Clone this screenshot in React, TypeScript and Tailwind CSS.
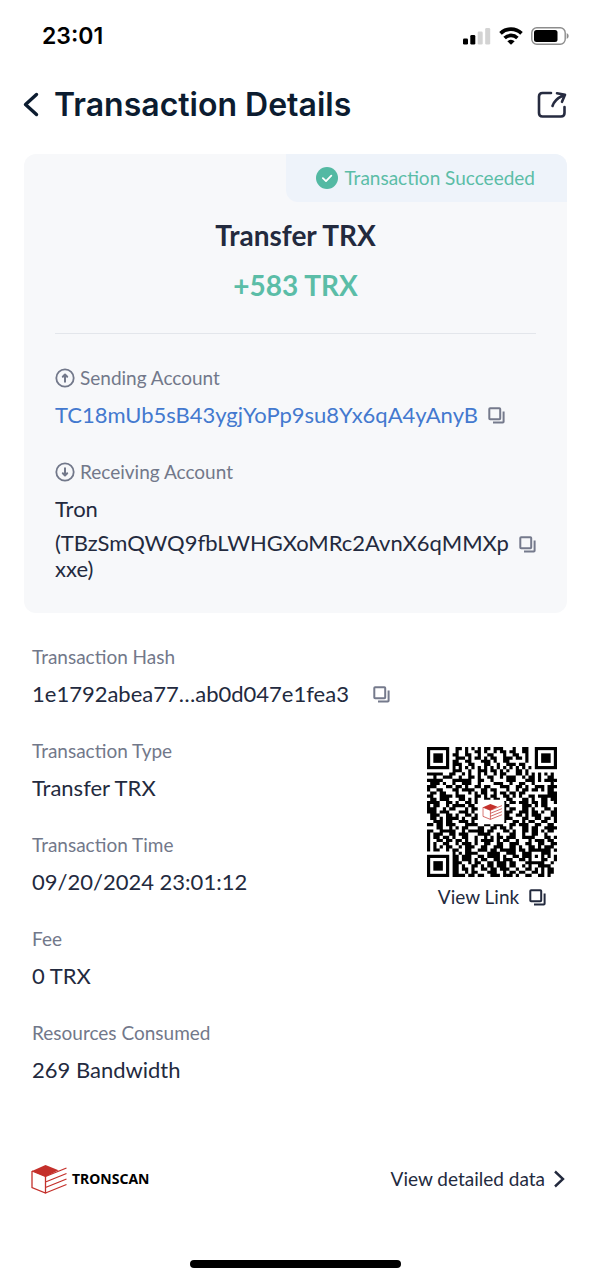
import type { ReactNode } from "react";

const QR_ROWS = [
  "#######..##.#.#.#.##.###...#..##..#######",
  "#.....#..#..#..##.#..#.##.##..##..#.....#",
  "#.###.#.##..##..#..##...#..##..#..#.###.#",
  "#.###.#..###.#.##.#.##..###.##.#..#.###.#",
  "#.###.#.##..##...###.#..##.....#..#.###.#",
  "#.....#.###..##...##..#..###.##...#.....#",
  "#######.#.#.#.#.#.#.#.#.#.#.#.#.#.#######",
  "........###..#..###.##.#.#..##.#.........",
  "#####..##..#.#..#.#..#.##...##.#.#.#.#.#.",
  "..#..###..#..##.#..##..#.###..#.##.#..##.",
  "#####...######..##..#....###...###.#.####",
  ".###.#..#..###..#....###..#..##..#.....#.",
  "###...##.##.#..##.##...###..##.#..###.###",
  "#..##...##.####..##.##...#..#.##.##.#.##.",
  ".##.##...#...#.#.##..#.##.##.##.......###",
  "##..####.###...##.#.##..##.#.#..##.######",
  ".##.###...##.#.#..##.##..##...##.#..##.##",
  "####..##.#..##.#........#.##.###.##.##..#",
  "#.##..#.####.##.........##....###.#.##...",
  "###..#.##...#.##........#.##..##.#...##.#",
  "###.###...###.#.........###..###.##.#..##",
  ".###..##.#..##.#........##..##.#.###...##",
  ".##.#.####.#..##........###...##..##.##.#",
  "..###.##..###.#.........#..##.#.##..##..#",
  "##.##.###...####..##.###..##.###..##..##.",
  "...##..#.#.##...##..##.##.#...##.##..####",
  "##..#####..#.#####.##...##.#..##.##.#.##.",
  "#.###..##.###...####..#...##..#..##..#...",
  "#.##.##.#..##..#..#.#.##.###..####...##.#",
  "#..##.##.##.#..#.####.#.##..#...#.###.##.",
  "#.#..##..#.###.#..##..##..###..##..##..##",
  "#.#.#.##..#.###..##..###..##.#..##.#.###.",
  "#.##..#.##..##..###.##.#####.##.#######.#",
  "........#.#.####...####..###..###...###..",
  "#.....#.##.###..##.####.#..##.###.#.#.#.#",
  "#.###.#.##.###.#.##..##.###..##.#...##..#",
  "#.###.#.###..#.##..##.###.##...######..#.",
  "#.###.#.##.#..##.#.##.###.##..#.#..####..",
  "#.....#.##.##.#..##.##.###..#..##.#.#.##.",
  "#######.##..#.##...###..#.##.##..##.#.##.",
  "........####.##.##..###.###.#..##..##.#..",
];

function finder(x: number, y: number) {
  return (
    <g>
      <rect x={x - 1} y={y - 1} width="9" height="9" fill="#fff" />
      <rect x={x} y={y} width="7" height="7" />
      <rect x={x + 1} y={y + 1} width="5" height="5" fill="#fff" />
      <rect x={x + 2} y={y + 2} width="3" height="3" />
    </g>
  );
}

function QrCode() {
  const cells = QR_ROWS.flatMap((row, y) =>
    [...row].map((c, x) => (c === "#" ? `M${x} ${y}h1v1h-1z` : "")),
  ).join("");

  return (
    <svg viewBox="0 0 41 41" className="size-[130px]" role="img" aria-label="QR code">
      <path d={cells} />
      {finder(0, 0)}
      {finder(34, 0)}
      {finder(0, 34)}
      <rect x="16.6" y="16.6" width="7.8" height="7.8" rx="0.8" fill="#fff" />
      <svg x="17.4" y="17.8" width="6.4" height="5.2" viewBox="0 0 36 30">
        <BoxMark />
      </svg>
    </svg>
  );
}

// Tronscan cube with the striped right face
function BoxMark() {
  return (
    <>
      <path d="M1 7 14.500 1 27.500 6.200 14.500 12.800z" fill="#c4302b" />
      <path
        d="M1 7v16.500l13.500 5.500V12.500L1 7M14.500 12.500 35.500 4M14.500 18 35.500 9.500M14.500 23.500 35.500 15M14.500 29 35.500 20.500"
        fill="none"
        stroke="#c4302b"
        strokeWidth="1.3"
      />
    </>
  );
}

function CopyButton({ label }: { label: string }) {
  return (
    <button type="button" aria-label={label} className="shrink-0 text-[#757a8c]">
      <CopyIcon />
    </button>
  );
}

function CopyIcon() {
  return (
    <svg viewBox="0 0 17 17" className="size-[17px]" fill="none" stroke="currentColor" strokeWidth="2">
      <rect x="1.300" y="1.300" width="10.900" height="10.900" rx="0.800" />
      <path d="M15.600 4.500v10.300q0 .8-.8.800H5" />
    </svg>
  );
}

function ArrowCircle({ down = false }: { down?: boolean }) {
  return (
    <svg
      viewBox="0 0 20 20"
      className={`size-5 ${down ? "rotate-180" : ""}`}
      fill="none"
      stroke="currentColor"
      strokeWidth="1.8"
      strokeLinecap="round"
      strokeLinejoin="round"
    >
      <circle cx="10" cy="10" r="8.700" />
      <path d="M10 13.800V6.800M7.800 8.700 10 6.500l2.200 2.200" strokeWidth="2" />
    </svg>
  );
}

function StatusBar() {
  return (
    <div className="flex h-[72px] items-center justify-between pr-[22px] pl-[42px] text-black">
      <span className="font-[Inter,sans-serif] text-[23px] leading-7 font-semibold">23:01</span>
      <div className="flex items-center gap-2">
        <svg viewBox="0 0 28 18" className="h-[18px] w-7">
          <rect x="0" y="11.500" width="5" height="6" rx="1.300" />
          <rect x="7.300" y="8" width="5" height="9.500" rx="1.300" />
          <rect x="14.700" y="4.500" width="5" height="13" rx="1.300" fill="#d3d3d3" />
          <rect x="22.200" y="1" width="5" height="16.500" rx="1.300" fill="#d3d3d3" />
        </svg>
        <svg viewBox="0 0 24 18" className="h-[18px] w-6" fill="none" stroke="#000" strokeWidth="3.600">
          <path d="M1.500 6.400a15 15 0 0 1 21 0M5.600 11a9.200 9.200 0 0 1 12.800 0" />
          <path d="M12 17.800 8.300 14.300a5.300 5.300 0 0 1 7.400 0z" fill="#000" stroke="none" />
        </svg>
        <svg viewBox="0 0 38 18" className="h-[18px] w-[38px]">
          <rect x="0.800" y="0.800" width="33.400" height="16.400" rx="5" fill="none" stroke="#8c8c8c" strokeWidth="1.400" />
          <rect x="3" y="3" width="23.500" height="12" rx="2.500" />
          <path d="M35.700 6v6q2-.8 2-3t-2-3" fill="#8c8c8c" />
        </svg>
      </div>
    </div>
  );
}

function Field({ label, children }: { label: string; children: ReactNode }) {
  return (
    <div>
      <dt className="text-[19px] leading-6 text-[#72788a]">{label}</dt>
      <dd className="mt-3 flex items-center text-[22px] leading-[26px] text-[#232a3e]">{children}</dd>
    </div>
  );
}

export default function App() {
  return (
    <div className="flex min-h-screen flex-col bg-white font-[Lato,sans-serif] text-[#232a3e]">
      <StatusBar />

      <header className="flex h-[66px] items-center pr-6 pl-[22px] text-[#0c1c30]">
        <button type="button" aria-label="Back">
          <svg viewBox="0 0 18 26" className="h-[26px] w-[18px]" fill="none" stroke="currentColor" strokeWidth="3.400" strokeLinecap="round" strokeLinejoin="round">
            <path d="M14.500 2.500 3.500 12.500l11 10" />
          </svg>
        </button>
        <h1 className="ml-[14px] flex-1 font-[Inter,sans-serif] text-[32px] leading-10 font-semibold">Transaction Details</h1>
        <button type="button" aria-label="Share" className="text-[#262b40]">
          <svg viewBox="0 0 30 28" className="h-7 w-[30px]" fill="none" stroke="currentColor" strokeWidth="2.600" strokeLinecap="round" strokeLinejoin="round">
            <path d="M14 2H5.500Q2 2 2 5.500v16.500q0 3.500 3.500 3.500h18.500q3.500 0 3.500-3.500V16" />
            <path d="M15.500 15q2-6.500 10.500-10.500M20 2.300l8 1.500-3 7" />
          </svg>
        </button>
      </header>

      <main className="mt-4 flex-1 px-6">
        <section className="overflow-hidden rounded-xl bg-[#f7f8fa]">
          <div className="ml-auto flex h-12 w-fit items-center gap-1.5 rounded-bl-xl bg-[#eef3fa] pr-8 pl-[30px] text-[19px] leading-6 text-[#5bbda7]">
            <svg viewBox="0 0 24 24" className="size-[22px]" fill="none">
              <circle cx="12" cy="12" r="12" fill="#53b9a3" />
              <path d="m7.500 12.200 3.400 3.200 5.800-6" stroke="#fff" strokeWidth="2" strokeLinecap="round" strokeLinejoin="round" />
            </svg>
            Transaction Succeeded
          </div>
          <div className="px-[31px] pb-[31px]">
            <h2 className="pt-[15px] text-center text-[28px] leading-9 font-bold">Transfer TRX</h2>
            <p className="mt-3.5 text-center text-[28px] leading-9 font-bold text-[#5bbda7]">+583 TRX</p>
            <hr className="mt-[30px] border-[#e3e6eb]" />

            <div className="mt-8 flex items-center gap-[5px] text-[19px] leading-6 text-[#72788a]">
              <ArrowCircle />
              Sending Account
            </div>
            <div className="mt-3 flex items-center gap-2.5 text-[22px] leading-[26px]">
              <a href="#sender" className="text-[#4379cf]">TC18mUb5sB43ygjYoPp9su8Yx6qA4yAnyB</a>
              <CopyButton label="Copy sending account" />
            </div>

            <div className="mt-8 flex items-center gap-[5px] text-[19px] leading-6 text-[#72788a]">
              <ArrowCircle down />
              Receiving Account
            </div>
            <p className="mt-3 text-[22px] leading-[26px]">Tron</p>
            <div className="mt-2 flex items-start gap-2 text-[22px] leading-[26px]">
              <p className="min-w-0 flex-1 break-all">(TBzSmQWQ9fbLWHGXoMRc2AvnX6qMMXpxxe)</p>
              <span className="flex h-7 items-center">
                <CopyButton label="Copy receiving account" />
              </span>
            </div>
          </div>
        </section>

        <div className="mt-8 px-2">
          <dl>
            <Field label="Transaction Hash">
              <span className="mr-6">1e1792abea77…ab0d047e1fea3</span>
              <CopyButton label="Copy transaction hash" />
            </Field>
          </dl>
          <div className="mt-8 flex items-start justify-between">
            <dl className="flex flex-col gap-8">
              <Field label="Transaction Type">Transfer TRX</Field>
              <Field label="Transaction Time">09/20/2024 23:01:12</Field>
              <Field label="Fee">0 TRX</Field>
              <Field label="Resources Consumed">269 Bandwidth</Field>
            </dl>
            <div className="mt-2 mr-[2px] flex flex-col items-center gap-2">
              <QrCode />
              <button type="button" className="flex items-center gap-2.5 text-[19px] leading-6">
                View Link
                <CopyIcon />
              </button>
            </div>
          </div>
        </div>
      </main>

      <footer className="px-[26px] pb-3">
        <div className="flex items-center justify-between pl-[5px]">
          <div className="flex items-center gap-[5px] text-black">
            <svg viewBox="0 0 36 30" className="h-[30px] w-9">
              <BoxMark />
            </svg>
            <span className="font-['Noto_Sans',sans-serif] text-[14px] leading-5 font-bold">TRONSCAN</span>
          </div>
          <a href="#details" className="flex items-center gap-2 text-[19px] leading-6">
            View detailed data
            <svg viewBox="0 0 12 18" className="h-[18px] w-3" fill="none" stroke="currentColor" strokeWidth="2.400">
              <path d="m2 1.500 8 7.500-8 7.500" />
            </svg>
          </a>
        </div>
        <div className="mx-auto mt-[66px] h-2 w-[211px] rounded-full bg-black" />
      </footer>
    </div>
  );
}
